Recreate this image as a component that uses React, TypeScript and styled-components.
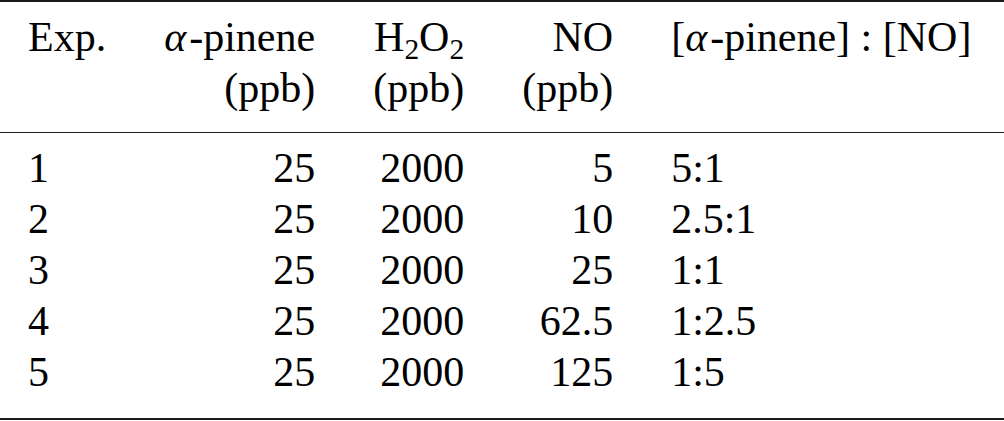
import styled, { createGlobalStyle } from "styled-components";

const GlobalStyle = createGlobalStyle`
  html, body {
    margin: 0;
    padding: 0;
    background: #ffffff;
  }
  body {
    font-family: "Liberation Serif", "Times New Roman", serif;
    color: #000000;
  }
`;

const Table = styled.table`
  width: 1004px;
  border-collapse: collapse;
  font-family: "Liberation Serif", "Times New Roman", serif;
  font-size: 42px;
  line-height: 51px;
  color: #000000;
  border-top: 2px solid #1a1a1a;
  border-bottom: 2px solid #1a1a1a;
`;

const Head = styled.thead`
  border-bottom: 1.4px solid #1a1a1a;
`;

const Th = styled.th<{ $align?: "left" | "right"; $first?: boolean; $last?: boolean }>`
  font-family: "Liberation Serif", "Times New Roman", serif;
  font-weight: normal;
  text-align: ${(p) => p.$align ?? "right"};
  vertical-align: top;
  white-space: nowrap;
  padding: 10px ${(p) => (p.$last ? "31px" : "29px")} 18px ${(p) => (p.$first ? "28px" : "29px")};
  width: ${(p) => (p.$last ? "100%" : "auto")};
`;

const Body = styled.tbody`
  tr:first-child td {
    padding-top: 10px;
  }
  tr:last-child td {
    padding-bottom: 20px;
  }
`;

const Td = styled.td<{ $align?: "left" | "right"; $first?: boolean; $last?: boolean }>`
  font-family: "Liberation Serif", "Times New Roman", serif;
  text-align: ${(p) => p.$align ?? "right"};
  white-space: nowrap;
  padding: 0 ${(p) => (p.$last ? "31px" : "29px")} 0 ${(p) => (p.$first ? "28px" : "29px")};
`;

const Greek = styled.i`
  font-family: "Liberation Serif", "Times New Roman", serif;
  margin-right: 3px;
`;

const Sub = styled.sub`
  font-size: 70%;
  line-height: 0;
  vertical-align: -8px;
`;

const rows = [
  { exp: "1", pinene: "25", h2o2: "2000", no: "5", ratio: "5:1" },
  { exp: "2", pinene: "25", h2o2: "2000", no: "10", ratio: "2.5:1" },
  { exp: "3", pinene: "25", h2o2: "2000", no: "25", ratio: "1:1" },
  { exp: "4", pinene: "25", h2o2: "2000", no: "62.5", ratio: "1:2.5" },
  { exp: "5", pinene: "25", h2o2: "2000", no: "125", ratio: "1:5" },
];

export default function App() {
  return (
    <>
      <GlobalStyle />
      <Table>
        <Head>
          <tr>
            <Th $align="left" $first>Exp.</Th>
            <Th>
              <Greek>α</Greek>-pinene
              <br />
              (ppb)
            </Th>
            <Th>
              H<Sub>2</Sub>O<Sub>2</Sub>
              <br />
              (ppb)
            </Th>
            <Th>
              NO
              <br />
              (ppb)
            </Th>
            <Th $align="left" $last>
              [<Greek>α</Greek>-pinene] : [NO]
            </Th>
          </tr>
        </Head>
        <Body>
          {rows.map((r) => (
            <tr key={r.exp}>
              <Td $align="left" $first>{r.exp}</Td>
              <Td>{r.pinene}</Td>
              <Td>{r.h2o2}</Td>
              <Td>{r.no}</Td>
              <Td $align="left" $last>{r.ratio}</Td>
            </tr>
          ))}
        </Body>
      </Table>
    </>
  );
}
